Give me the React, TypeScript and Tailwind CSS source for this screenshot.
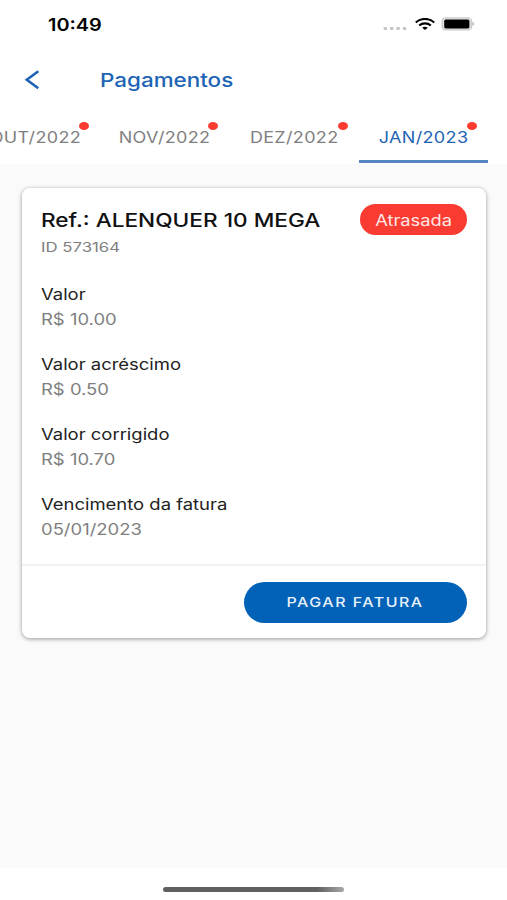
import clsx from 'clsx';

const tabs = [
  { label: 'OUT/2022', active: false },
  { label: 'NOV/2022', active: false },
  { label: 'DEZ/2022', active: false },
  { label: 'JAN/2023', active: true },
];

const fields = [
  { label: 'Valor', value: 'R$ 10.00' },
  { label: 'Valor acréscimo', value: 'R$ 0.50' },
  { label: 'Valor corrigido', value: 'R$ 10.70' },
  { label: 'Vencimento da fatura', value: '05/01/2023' },
];

const StatusBar = () => (
  <div className="flex h-12 shrink-0 items-center justify-between pl-12 pr-8 pt-px">
    <span className="origin-left scale-x-[1.17] text-[17px] font-semibold leading-6 text-black">10:49</span>
    <div className="flex items-center">
      <svg className="mt-2 h-1 w-6" viewBox="0 0 24 4" fill="#c4c4c4">
        <rect x="0.5" y="0" width="3.6" height="3" rx="1.2" />
        <rect x="6.9" y="0" width="3.6" height="3" rx="1.2" />
        <rect x="13.3" y="0" width="3.6" height="3" rx="1.2" />
        <rect x="19.7" y="0" width="3.6" height="3" rx="1.2" />
      </svg>
      <svg className="-mt-px ml-2 h-3 w-5" viewBox="0 0 20 12" fill="none" stroke="#000" strokeWidth="2.1">
        <path d="M0.8 4.4C5.8 -0.2 14.2 -0.2 19.2 4.4" />
        <path d="M4.2 7.5C7.4 4.6 12.6 4.6 15.8 7.5" />
        <path d="M7.2 9.8C8.8 8.4 11.2 8.4 12.8 9.8L10 12Z" fill="#000" stroke="none" />
      </svg>
      <svg className="-mt-px ml-1.5 h-3.5 w-[34px]" viewBox="0 0 34 14">
        <rect x="1.2" y="0.9" width="29.4" height="12" rx="3.6" fill="#e4e4e4" stroke="#cbcbcb" strokeWidth="1.4" />
        <rect x="3.2" y="2.6" width="25.2" height="8.8" rx="1.6" fill="#000" />
        <path d="M31.6 5C33.6 5.8 33.6 8 31.6 8.8Z" fill="#aaa" />
      </svg>
    </div>
  </div>
);

const TabItem = ({ label, active }: { label: string; active: boolean }) => (
  <button
    className={clsx(
      'relative flex h-[51px] w-[129px] shrink-0 items-center justify-center border-b-[3px] pt-[3px] text-[15.5px] tracking-[0.3px]',
      active ? 'border-[#5586c4] text-[#1d64b4]' : 'border-transparent text-[#7f7f7f]'
    )}
  >
    <span className="scale-x-[1.16] whitespace-nowrap">{label}</span>
    <span className="absolute right-[11px] top-[10px] h-2 w-2.5 rounded-[50%] bg-[#fb3a30]" />
  </button>
);

const App = () => {
  return (
    <div className="flex h-[900px] w-[507px] flex-col overflow-hidden bg-[#fafafa] font-['Inter',sans-serif]">
      <header className="flex h-[164px] shrink-0 flex-col bg-white">
        <StatusBar />
        <div className="flex h-16 shrink-0 items-center pl-6">
          <svg className="h-5 w-4" viewBox="0 0 16 20" fill="none" stroke="#1d64b4" strokeWidth="2.6">
            <path d="M14.3 1.2L2.8 9.8L14.3 18.3" />
          </svg>
          <h1 className="ml-[60px] origin-left scale-x-[1.18] pt-0.5 text-[19px] font-[550] text-[#1d64b4]">Pagamentos</h1>
        </div>
        <nav className="flex justify-end gap-[0.4px] pr-[19px]">
          {tabs.map((tab) => (
            <TabItem key={tab.label} label={tab.label} active={tab.active} />
          ))}
        </nav>
      </header>

      <main className="flex-1 pl-[22px] pr-[21px] pt-6">
        <section className="h-[450px] rounded-lg bg-white shadow-[0_1px_4px_rgba(0,0,0,0.4)]">
          <div className="h-[378px] border-b-2 border-[#f1f2f2] px-[19px] pt-4">
            <div className="flex items-start justify-between">
              <div className="pt-px">
                <h2 className="origin-left scale-x-[1.19] whitespace-nowrap text-[19px] font-[550] leading-8 text-[#111]">
                  Ref.: ALENQUER 10 MEGA
                </h2>
                <p className="origin-left scale-x-[1.24] text-[13.5px] leading-[21px] text-[#808080]">ID 573164</p>
              </div>
              <span className="flex h-[31px] w-[107px] items-center justify-center rounded-full bg-[#f93b31] pt-[3px] text-[15.5px] text-[#ffe6e4]">
                <span className="scale-x-[1.18]">Atrasada</span>
              </span>
            </div>
            <dl className="mt-6 flex flex-col gap-5">
              {fields.map((field) => (
                <div key={field.label} className="origin-left scale-x-[1.19] whitespace-nowrap text-[15.5px] leading-[25px]">
                  <dt className="text-[#222]">{field.label}</dt>
                  <dd className="text-[#7f7f7f]">{field.value}</dd>
                </div>
              ))}
            </dl>
          </div>
          <div className="flex justify-end px-[19px] pt-[15.5px]">
            <button className="flex h-[41px] w-[223px] items-center justify-center rounded-full bg-[#0262b8] text-[13.5px] font-medium tracking-[1.3px] text-[#e6f1fb]">
              <span className="scale-x-[1.18] whitespace-nowrap">PAGAR FATURA</span>
            </button>
          </div>
        </section>
      </main>

      <footer className="flex h-8 shrink-0 justify-center bg-white pt-[19px]">
        <div className="h-[5px] w-[181px] rounded-full bg-linear-to-r from-[#606060] from-85% to-[#a8a8a8]" />
      </footer>
    </div>
  );
};

export default App;
